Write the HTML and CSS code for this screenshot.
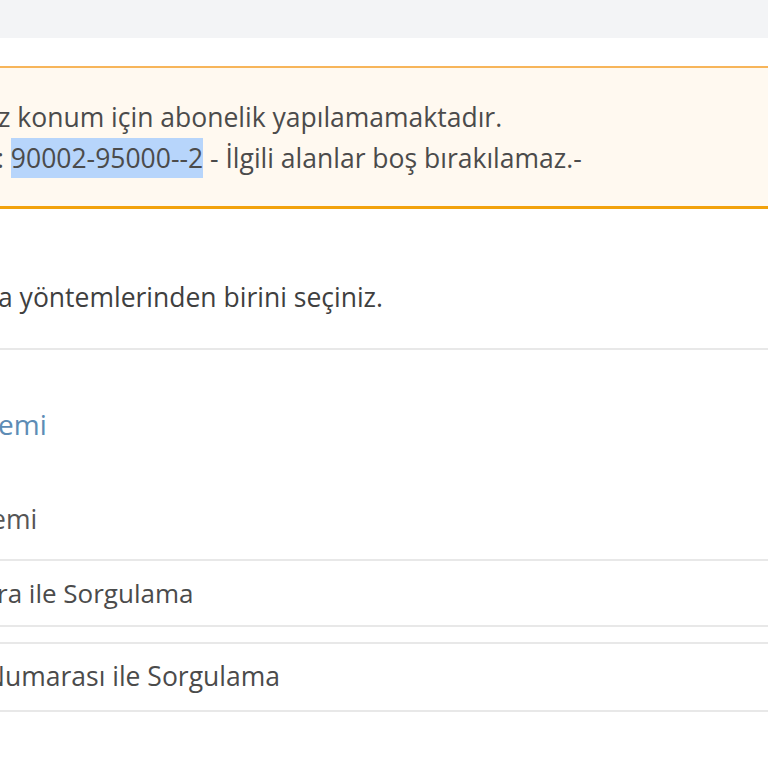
FILE: index.html
```html
<!DOCTYPE html>
<html lang="tr">
<head>
<meta charset="utf-8">
<link rel="stylesheet" href="styles.css">
</head>
<body>
<div class="topbar"></div>
<div class="page">
  <div class="alert">
    <p class="alert-line l1">z konum için abonelik yapılamamaktadır.</p>
    <p class="alert-line l2">: <span class="sel">90002-95000--2</span> - İlgili alanlar boş bırakılamaz.-</p>
  </div>
  <p class="intro">a yöntemlerinden birini seçiniz.</p>
  <div class="section">
    <h3 class="section-title">emi</h3>
    <div class="label">emi</div>
    <div class="option o1">ra ile Sorgulama</div>
    <div class="option o2"><span class="shift">Numarası ile Sorgulama</span></div>
  </div>
</div>
</body>
</html>
```

FILE: styles.css
```css
html, body {
  margin: 0;
  padding: 0;
  background: #ffffff;
  overflow: hidden;
}
body {
  font-family: "Open Sans", "Noto Sans", sans-serif;
  font-size: 26.5px;
  color: #4b4b4b;
}
.topbar {
  height: 38px;
  background: #f3f4f6;
}
.page {
  padding-top: 28px;
}
.alert {
  background: #fff9f0;
  border-top: 2px solid #f7b55a;
  border-bottom: 3px solid #f2a20c;
  height: 138px;
  box-sizing: content-box;
}
.alert-line {
  margin: 0;
  line-height: 41px;
  white-space: nowrap;
}
.l1 {
  padding-top: 29px;
  margin-left: -2px;
}
.l2 {
  margin-left: -3px;
}
.sel {
  background: #b7d5fb;
  padding: 2px 0 2px;
}
.intro {
  margin: 0 0 0 -2px;
  padding-top: 72px;
  height: 67px;
  line-height: 33px;
  border-bottom: 2px solid #e8e8e8;
  color: #3f3f3f;
  white-space: nowrap;
}
.section {
  padding-top: 58px;
}
.section-title {
  margin: 0 0 0 -2px;
  font-weight: normal;
  font-size: 28px;
  color: #5d8cb5;
  line-height: 33px;
  height: 95px;
}
.label {
  margin-left: -9px;
  padding-left: 0;
  line-height: 33px;
  height: 56px;
  border-bottom: 2px solid #e8e8e8;
  color: #555555;
}
.option {
  line-height: 33px;
  border-bottom: 2px solid #e8e8e8;
  white-space: nowrap;
}
.o1 {
  font-size: 26px;
  text-indent: -3px;
  padding-top: 16px;
  height: 48px;
  margin-bottom: 15px;
}
.o2 {
  border-top: 2px solid #e8e8e8;
  padding-top: 16px;
  height: 50px;
}
.shift {
  display: inline-block;
  margin-left: -15px;
}
```
